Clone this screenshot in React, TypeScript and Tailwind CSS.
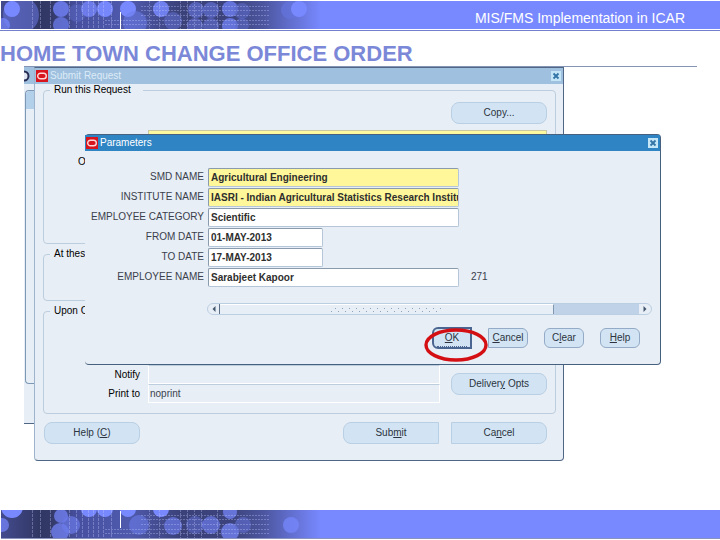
import type { ReactNode } from "react";
import clsx from "clsx";

type Field = { id: string; label: string; value: string; required?: boolean; short?: boolean; code?: string };

const FIELDS: Field[] = [
  { id: "smd", label: "SMD NAME", value: "Agricultural Engineering", required: true },
  {
    id: "institute",
    label: "INSTITUTE NAME",
    value: "IASRI - Indian Agricultural Statistics Research Institute",
    required: true,
  },
  { id: "category", label: "EMPLOYEE CATEGORY", value: "Scientific" },
  { id: "from", label: "FROM DATE", value: "01-MAY-2013", short: true },
  { id: "to", label: "TO DATE", value: "17-MAY-2013", short: true },
  { id: "employee", label: "EMPLOYEE NAME", value: "Sarabjeet Kapoor", code: "271" },
];

// x, y, r, fill, opacity
type Dot = [number, number, number, string, number];

const TOP_DOTS: Dot[] = [
  [20, 14, 18, "#6673d8", 0.6],
  [2, 24, 7, "#7889ff", 0.7],
  [11, 8, 8, "#7889ff", 1],
  [60, 8, 8, "#6b7bea", 0.9],
  [60, 24, 8, "#6b7bea", 0.75],
  [76, 12, 9, "#5c69c8", 0.5],
  [88, 8, 8, "#7080f0", 0.9],
  [104, 8, 8, "#7889ff", 0.95],
  [127, 8, 8, "#7889ff", 1],
  [134, 22, 12, "#6b7bea", 0.55],
  [160, 8, 8, "#7889ff", 0.85],
  [172, 20, 9, "#5f6ccb", 0.6],
  [195, 9, 8, "#5f6ccb", 0.75],
  [210, 9, 8, "#5f6ccb", 0.75],
  [194, 25, 8, "#5c69c8", 0.7],
  [210, 25, 8, "#5c69c8", 0.7],
  [229, 8, 8, "#6b7bea", 0.85],
  [229, 25, 8, "#6b7bea", 0.85],
  [241, 10, 8, "#5c69c8", 0.6],
  [241, 24, 7, "#5c69c8", 0.6],
  [289, 9, 9, "#6473dc", 0.7],
  [298, 8, 8, "#7889ff", 1],
];

const BOTTOM_DOTS: Dot[] = [
  [11, -3, 11, "#7889ff", 1],
  [1, 15, 7, "#7889ff", 0.7],
  [60, 6, 7, "#7889ff", 0.7],
  [59, 22, 9, "#7889ff", 0.7],
  [70, 15, 9, "#6b7bea", 0.7],
  [88, -1, 8, "#7889ff", 1],
  [104, -1, 8, "#7889ff", 1],
  [127, -1, 8, "#7889ff", 1],
  [138, 15, 10, "#6b7bea", 0.6],
  [160, -1, 8, "#7889ff", 1],
  [172, 16, 9, "#6b7bea", 0.7],
  [194, 15, 9, "#5c69c8", 0.6],
  [210, 15, 9, "#6b7bea", 0.7],
  [229, 2, 7, "#7889ff", 0.7],
  [229, 22, 9, "#7889ff", 0.7],
  [242, 15, 8, "#5c69c8", 0.7],
  [290, 15, 8, "#7889ff", 0.7],
];

function BandArt({ id, dots, tickY, tickH }: { id: string; dots: Dot[]; tickY: number; tickH: number }) {
  return (
    <svg className="h-full w-80 flex-none" viewBox="0 0 320 28" preserveAspectRatio="none" aria-hidden="true">
      <defs>
        <linearGradient id={id}>
          <stop offset="0" stopColor="#434b8e" />
          <stop offset="0.12" stopColor="#313763" />
          <stop offset="0.16" stopColor="#343a69" />
          <stop offset="0.24" stopColor="#4750a0" />
          <stop offset="0.4" stopColor="#4f5aad" />
          <stop offset="0.56" stopColor="#3b427a" />
          <stop offset="0.72" stopColor="#3c437c" />
          <stop offset="0.82" stopColor="#4c569f" />
          <stop offset="0.9" stopColor="#606dcb" />
          <stop offset="1" stopColor="#7889ff" />
        </linearGradient>
      </defs>
      <rect width="320" height="28" fill={`url(#${id})`} />
      {dots.map(([x, y, r, fill, opacity], i) => (
        <circle key={i} cx={x} cy={y} r={r} fill={fill} opacity={opacity} />
      ))}
      <g stroke="#c3caff" strokeWidth="1" strokeDasharray="3 1" opacity="0.35">
        {[31.5, 39.5, 49.5, 68.5, 75.5, 81.5, 87.5, 92.5, 97.5, 102.5, 110.5].map((x) => (
          <path key={x} d={`M${x} 0V28`} />
        ))}
      </g>
      <g stroke="#c3caff" strokeWidth="1" strokeDasharray="2 1" opacity="0.35">
        {[5.5, 9.5, 14.5, 19.5, 23.5].map((y) => (
          <path key={y} d={`M${y > 18 ? 104 : 140} ${y}H268`} />
        ))}
        {[148.5, 158.5, 179.5, 186.5, 193.5, 200.5, 216.5].map((x) => (
          <path key={x} d={`M${x} 0V28`} />
        ))}
      </g>
      <rect x="119" y={tickY} width="1" height={tickH} fill="#fff" />
    </svg>
  );
}

function OracleMark() {
  return (
    <svg className="h-3 w-3 flex-none" viewBox="0 0 12 12" aria-hidden="true">
      <rect width="12" height="12" fill="#d8141c" />
      <rect x="1.7" y="3.2" width="8.6" height="5.6" rx="2.8" fill="none" stroke="#ffd9d9" strokeWidth="1.4" />
    </svg>
  );
}

function TitleBar({ title, active }: { title: string; active?: boolean }) {
  return (
    <div
      className={clsx(
        "flex h-4 items-center gap-0.5 pr-0.5 pl-px leading-4",
        active ? "bg-[#2f84c4] text-white" : "bg-[#9fc0de] text-[#dcebf7]",
      )}
    >
      <OracleMark />
      <h2 className="flex-1">{title}</h2>
      <button type="button" aria-label={`Close ${title}`} className="h-2.5 w-2.5 bg-[#c4e6f7]">
        <svg viewBox="0 0 10 10" className="h-2.5 w-2.5" aria-hidden="true">
          <path d="M2.5 2.5l5 5M7.5 2.5l-5 5" stroke="#3274a6" strokeWidth="1.8" />
        </svg>
      </button>
    </div>
  );
}

function PushButton({ className, children }: { className?: string; children: ReactNode }) {
  return (
    <button
      type="button"
      className={clsx(
        "flex items-center justify-center bg-[#d2e4f4] text-[#2b3440]",
        className,
      )}
    >
      {children}
    </button>
  );
}

function Group({ title, className, children }: { title: string; className?: string; children?: ReactNode }) {
  return (
    <fieldset className={clsx("mr-[7px] ml-2 rounded border border-[#bccddd]", className)}>
      <legend className="ml-1.5 pr-3 pl-1 leading-3 text-black">{title}</legend>
      {children}
    </fieldset>
  );
}

function SubmitRequest() {
  return (
    <section className="absolute top-0 left-2.5 w-[530px] rounded-b border border-[#4f6684] border-l-[#9db4cc] bg-[#e8eef5] pb-4">
      <TitleBar title="Submit Request" />
      <Group title="Run this Request" className="min-h-40">
        <div className="flex flex-col pt-1.5 pr-2">
          <PushButton className="h-[22px] w-24 self-end rounded-lg border border-[#b9cfe4]">Copy...</PushButton>
          <input
            aria-label="Request name"
            className="mt-1.5 ml-[104px] h-5 border border-[#c9c9a4] bg-[#fcf8a0]"
          />
          <span className="mt-1 ml-[34px] text-black">O</span>
        </div>
      </Group>
      <Group title="At thes" className="mt-1 min-h-[53px]" />
      <Group title="Upon C" className="mt-1 min-h-[109px]">
        <div className="flex items-center justify-between pt-12 pr-2">
          <div className="grid grid-cols-[96px_292px] items-center gap-x-2">
            <label htmlFor="notify" className="text-right text-black">
              Notify
            </label>
            <input id="notify" className="h-[19px] border border-white border-t-[#bccddd] px-px" />
            <label htmlFor="print" className="text-right text-black">
              Print to
            </label>
            <input
              id="print"
              defaultValue="noprint"
              className="h-[19px] border border-white border-t-[#bccddd] px-px text-[#39424e]"
            />
          </div>
          <PushButton className="h-[22px] w-24 rounded-lg border border-[#b9cfe4]">
            <span>
              Deliver<u>y</u> Opts
            </span>
          </PushButton>
        </div>
      </Group>
      <div className="mt-2 flex gap-3 pr-4 pl-[9px]">
        <PushButton className="mr-auto h-[22px] w-24 rounded-lg border border-[#b9cfe4]">
          <span>
            Help (<u>C</u>)
          </span>
        </PushButton>
        <PushButton className="h-[22px] w-24 rounded-l-lg border border-[#b9cfe4]">
          <span>
            Sub<u>m</u>it
          </span>
        </PushButton>
        <PushButton className="h-[22px] w-24 rounded-r-lg border border-[#b9cfe4]">
          <span>
            Ca<u>n</u>cel
          </span>
        </PushButton>
      </div>
    </section>
  );
}

function HorizontalScroll() {
  return (
    <div className="mt-4 mr-2 ml-[122px] flex h-3 rounded-full border border-[#bccfe2] bg-[#e8eef5]">
      <button type="button" aria-label="Scroll left" className="flex w-3 items-center justify-center border-r border-[#5c6f88]">
        <svg viewBox="0 0 6 8" className="h-2 w-1.5" aria-hidden="true">
          <path d="M4.5 1v6L1.5 4z" fill="#43566f" />
        </svg>
      </button>
      <div className="flex flex-1 bg-[#c0d2e8]">
        <div className="flex w-[334px] items-center justify-center border-t border-r border-t-white border-r-[#8298b2] bg-[#e8eef5]">
          <svg className="h-2 w-28" aria-hidden="true">
            <pattern id="grip" width="7" height="7" patternUnits="userSpaceOnUse">
              <path d="M0 5h1v1H0zM4 2h1v1H4z" fill="#8fa3bb" />
            </pattern>
            <rect width="112" height="7" fill="url(#grip)" />
          </svg>
        </div>
      </div>
      <button type="button" aria-label="Scroll right" className="flex w-3 items-center justify-center">
        <svg viewBox="0 0 6 8" className="h-2 w-1.5" aria-hidden="true">
          <path d="M1.5 1v6l3-3z" fill="#43566f" />
        </svg>
      </button>
    </div>
  );
}

function Parameters() {
  return (
    <section
      role="dialog"
      aria-label="Parameters"
      className="absolute top-[67px] left-[61px] w-[576px] rounded border-y border-r border-[#46617f] bg-[#e8eef5] pb-[15px]"
    >
      <TitleBar title="Parameters" active />
      <div className="mt-4 flex flex-col">
        {FIELDS.map((f) => (
          <div key={f.id} className="flex h-5 items-center">
            <label htmlFor={f.id} className="w-[119px] text-right text-[#39404c]">
              {f.label}
            </label>
            <input
              id={f.id}
              defaultValue={f.value}
              className={clsx(
                "ml-1 h-[19px] rounded-xs border border-[#b4c6d8] border-t-[#8a9bad] border-l-[#8a9bad] pl-0.5 font-bold text-[#2e2e2e]",
                f.short ? "w-[115px]" : "w-[251px]",
                f.required ? "bg-[#fff799]" : "bg-white",
              )}
            />
            {f.code && <output className="ml-3 text-[#39404c]">{f.code}</output>}
          </div>
        ))}
      </div>
      <HorizontalScroll />
      <div className="mt-3 flex items-center justify-end gap-4 pr-5">
        <div className="relative">
          <PushButton className="h-[22px] w-10 rounded-l-md border-2 border-[#4a6690]">
            <span className="border-b border-dotted border-[#4a6690] px-2 leading-4">
              <u>O</u>K
            </span>
          </PushButton>
          {/* hand-drawn marker around the button to press */}
          <svg
            className="pointer-events-none absolute top-px -left-2 h-9 w-16"
            viewBox="0 0 64 36"
            aria-hidden="true"
          >
            <ellipse cx="32" cy="17" rx="30" ry="15" fill="none" stroke="#d40f14" strokeWidth="3.4" />
          </svg>
        </div>
        <PushButton className="h-5 w-10 rounded-r-md border border-[#93abc6]">
          <span>
            <u>C</u>ancel
          </span>
        </PushButton>
        <PushButton className="h-5 w-10 rounded-md border border-[#93abc6]">
          <span>
            C<u>l</u>ear
          </span>
        </PushButton>
        <PushButton className="h-5 w-10 rounded-md border border-[#93abc6]">
          <span>
            <u>H</u>elp
          </span>
        </PushButton>
      </div>
    </section>
  );
}

export default function App() {
  return (
    <div className="flex min-h-screen flex-col bg-white font-['Liberation_Sans',Arial,sans-serif]">
      <header className="border-b border-[#7380cc] pt-px pb-px">
        <div className="ml-px flex h-7 items-center justify-between bg-[#7889ff]">
          <BandArt id="band-top" dots={TOP_DOTS} tickY={11} tickH={17} />
          <p className="pt-1.5 pr-[35px] text-sm text-white">MIS/FMS Implementation in ICAR</p>
        </div>
      </header>

      <h1 className="pt-2.5 text-[22px] leading-[25px] font-bold text-[#7b88d8]">
        HOME TOWN CHANGE OFFICE ORDER
      </h1>

      <main className="relative mr-[23px] ml-6 min-h-[395px] flex-1 border-t border-[#8494b4] text-[10px] leading-4">
        {/* window stack underneath the request form */}
        <div className="absolute top-0 left-0 h-[357px] w-20 border-b border-[#4f6684] bg-[#e8eef5]">
          <div className="flex h-[17px] items-center bg-[#9fc0de]">
            <svg className="h-3 w-2" viewBox="0 0 8 12" aria-hidden="true">
              <circle cx="0" cy="6" r="4.5" fill="#dfe6f2" stroke="#262b52" strokeWidth="2" />
            </svg>
          </div>
          <div className="mt-1.5 ml-px h-[294px] rounded-l border border-r-0 border-[#7d98b5]">
            <div className="h-[18px] rounded-tl bg-[#b3d0ea]" />
          </div>
        </div>
        <SubmitRequest />
        <Parameters />
      </main>

      <footer className="ml-px flex h-[30px] flex-none border-b border-white">
        <div className="flex flex-1 border-b border-[#8a92bd] bg-[#7889ff]">
          <BandArt id="band-bottom" dots={BOTTOM_DOTS} tickY={1} tickH={17} />
        </div>
      </footer>
    </div>
  );
}
